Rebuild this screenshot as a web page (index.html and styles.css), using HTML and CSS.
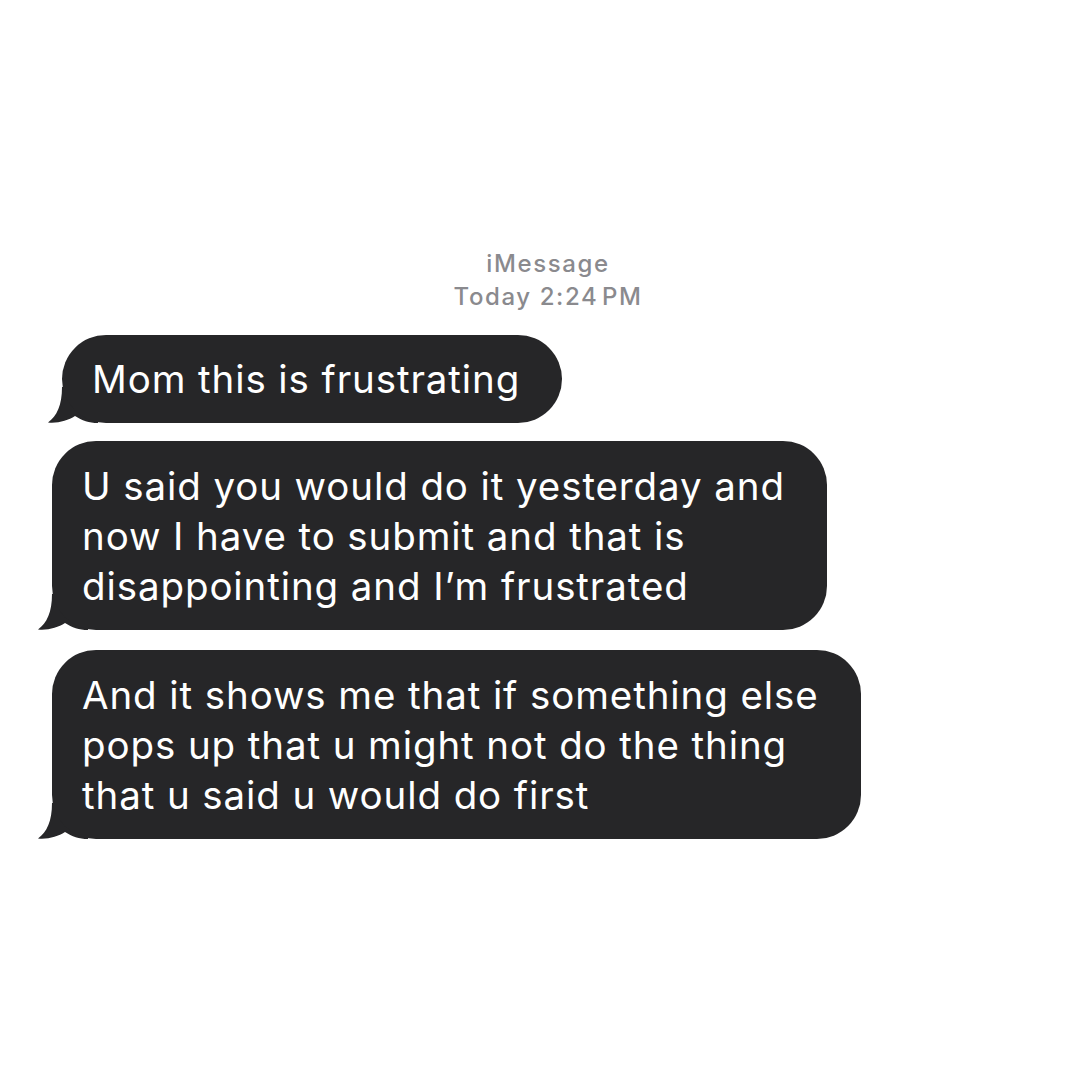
FILE: index.html
```html
<!DOCTYPE html>
<html lang="en">
<head>
    <meta charset="UTF-8">
    <meta name="viewport" content="width=device-width, initial-scale=1.0">
    <title>iMessage</title>
    <link rel="stylesheet" href="styles.css">
</head>
<body>

    <div id="thread">
        <div id="thread-header">
            <p class="service">iMessage</p>
            <p class="timestamp"><span class="day">Today</span> 2:24&#8202;PM</p>
        </div>

        <div class="bubble bubble-first">
            Mom this is frustrating
            <svg class="tail" viewBox="0 0 50 36" width="50" height="36"><path d="M14 0 C14 18 9 29 0 35.5 C10 36.5 20 33.5 27 29 C34 33.5 41 36 50 36 L50 0 Z"/></svg>
        </div>

        <div class="bubble">
            U said you would do it yesterday and<br>
            now I have to submit and that is<br>
            disappointing and I’m frustrated
            <svg class="tail" viewBox="0 0 50 36" width="50" height="36"><path d="M14 0 C14 18 9 29 0 35.5 C10 36.5 20 33.5 27 29 C34 33.5 41 36 50 36 L50 0 Z"/></svg>
        </div>

        <div class="bubble">
            And it shows me that if something else<br>
            pops up that u might not do the thing<br>
            that u said u would do first
            <svg class="tail" viewBox="0 0 50 36" width="50" height="36"><path d="M14 0 C14 18 9 29 0 35.5 C10 36.5 20 33.5 27 29 C34 33.5 41 36 50 36 L50 0 Z"/></svg>
        </div>
    </div>

</body>
</html>
```

FILE: styles.css
```css
body {
    background-color: #fff;
    margin: 0;
    width: 1080px;
    height: 1080px;
    overflow: hidden;
    font-family: Inter, 'Noto Sans', sans-serif;
}

#thread {
    display: flex;
    flex-direction: column;
    align-items: flex-start;
    padding-top: 247px;
}

#thread-header {
    align-self: stretch;
    padding-left: 16px;
    margin-bottom: 22px;
    text-align: center;
    color: #8a8a8e;
    font-size: 24px;
    font-weight: 500;
    letter-spacing: 1.6px;
    line-height: 33px;
}

#thread-header p {
    margin: 0;
}

.bubble {
    position: relative;
    margin: 0 0 20px 52px;
    padding: 20px 42px 19px 30px;
    background-color: #262628;
    color: #fff;
    font-size: 38.5px;
    letter-spacing: 0.9px;
    line-height: 50px;
    border-radius: 44px;
}

.bubble-first {
    margin-left: 62px;
    margin-bottom: 18px;
    padding-top: 19px;
}

.tail {
    position: absolute;
    left: -14px;
    bottom: 0;
    z-index: -1;
    fill: #262628;
}
```
